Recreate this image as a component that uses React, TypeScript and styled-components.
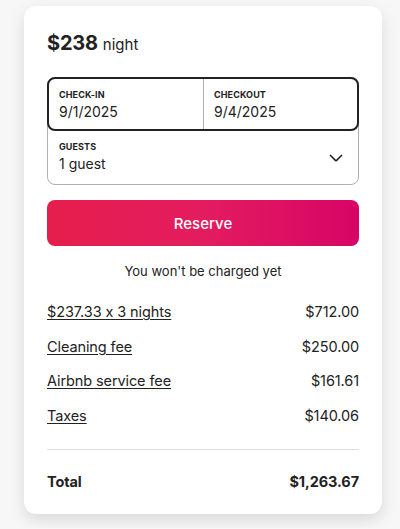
import styled, {createGlobalStyle} from "styled-components";
import {FC} from "react";

const GlobalStyles = createGlobalStyle`
  html, body {
    margin: 0;
    padding: 0;
    background: #f7f7f7;
    font-family: Inter, "Noto Sans", sans-serif;
    font-feature-settings: "calt" 0;
    color: #222222;
  }
`;

const Page = styled.div`
  padding: 6px 18px 14px 24px;
`;

const Card = styled.div`
  width: 358px;
  box-sizing: border-box;
  background: #ffffff;
  border-radius: 12px;
  box-shadow: 0 6px 16px rgba(0, 0, 0, 0.12);
  padding: 24px 23px 22px 23px;
`;

const PriceLine = styled.div`
  display: flex;
  align-items: baseline;
  gap: 5px;
  line-height: 26px;
`;

const Price = styled.span`
  font-size: 20px;
  font-weight: 700;
  letter-spacing: -0.2px;
`;

const Unit = styled.span`
  font-size: 15px;
`;

const Picker = styled.div`
  margin-top: 19px;
  border: 1px solid #b0b0b0;
  border-radius: 8px;
`;

const DatesRow = styled.div`
  display: grid;
  grid-template-columns: 1fr 1fr;
  border: 2px solid #222222;
  border-radius: 8px;
  margin: -1px -1px 0 -1px;
  height: 50px;
`;

const Field = styled.div<{ $divider?: boolean }>`
  padding: 10px 12px 0 10px;
  border-left: ${p => (p.$divider ? "1px solid #b0b0b0" : "none")};
`;

const Label = styled.div`
  font-size: 9px;
  font-weight: 700;
  letter-spacing: 0.1px;
  line-height: 12px;
`;

const Value = styled.div`
  font-size: 14px;
  line-height: 18px;
  margin-top: 2px;
`;

const GuestsRow = styled.div`
  display: flex;
  align-items: center;
  justify-content: space-between;
  padding: 10px 14px 11px 11px;
`;

const Reserve = styled.button`
  display: block;
  width: 100%;
  height: 46px;
  margin-top: 15px;
  border: none;
  border-radius: 8px;
  background: linear-gradient(to right, #e61e4d 0%, #e31c5f 50%, #d70466 100%);
  color: #ffffff;
  font-family: inherit;
  font-size: 15px;
  font-weight: 500;
`;

const Note = styled.div`
  text-align: center;
  font-size: 13px;
  line-height: 18px;
  margin-top: 16px;
`;

const Lines = styled.div`
  display: flex;
  flex-direction: column;
  gap: 14.5px;
  margin-top: 22px;
  padding-bottom: 23px;
  border-bottom: 1px solid #dddddd;
`;

const Line = styled.div`
  display: flex;
  justify-content: space-between;
  font-size: 14.5px;
  letter-spacing: -0.1px;
  line-height: 20px;
`;

const LineLabel = styled.span`
  text-decoration: underline;
  text-underline-offset: 2px;
  text-decoration-thickness: 1px;
`;

const TotalLine = styled(Line)`
  font-weight: 700;
  margin-top: 22px;
`;

const Chevron: FC = () => (
    <svg width="16" height="16" viewBox="0 0 32 32" fill="none" stroke="#222" strokeWidth="3">
        <path d="M28 12 16.7 23.3a1 1 0 0 1-1.4 0L4 12"/>
    </svg>
);

const items = [
    {label: "$237.33 x 3 nights", amount: "$712.00"},
    {label: "Cleaning fee", amount: "$250.00"},
    {label: "Airbnb service fee", amount: "$161.61"},
    {label: "Taxes", amount: "$140.06"},
];

const App: FC = () => {
    return <>
        <GlobalStyles/>
        <Page>
            <Card>
                <PriceLine>
                    <Price>$238</Price>
                    <Unit>night</Unit>
                </PriceLine>
                <Picker>
                    <DatesRow>
                        <Field>
                            <Label>CHECK-IN</Label>
                            <Value>9/1/2025</Value>
                        </Field>
                        <Field $divider>
                            <Label>CHECKOUT</Label>
                            <Value>9/4/2025</Value>
                        </Field>
                    </DatesRow>
                    <GuestsRow>
                        <div>
                            <Label>GUESTS</Label>
                            <Value>1 guest</Value>
                        </div>
                        <Chevron/>
                    </GuestsRow>
                </Picker>
                <Reserve>Reserve</Reserve>
                <Note>You won't be charged yet</Note>
                <Lines>
                    {items.map(i => (
                        <Line key={i.label}>
                            <LineLabel>{i.label}</LineLabel>
                            <span>{i.amount}</span>
                        </Line>
                    ))}
                </Lines>
                <TotalLine>
                    <span>Total</span>
                    <span>$1,263.67</span>
                </TotalLine>
            </Card>
        </Page>
    </>;
};
export default App;
